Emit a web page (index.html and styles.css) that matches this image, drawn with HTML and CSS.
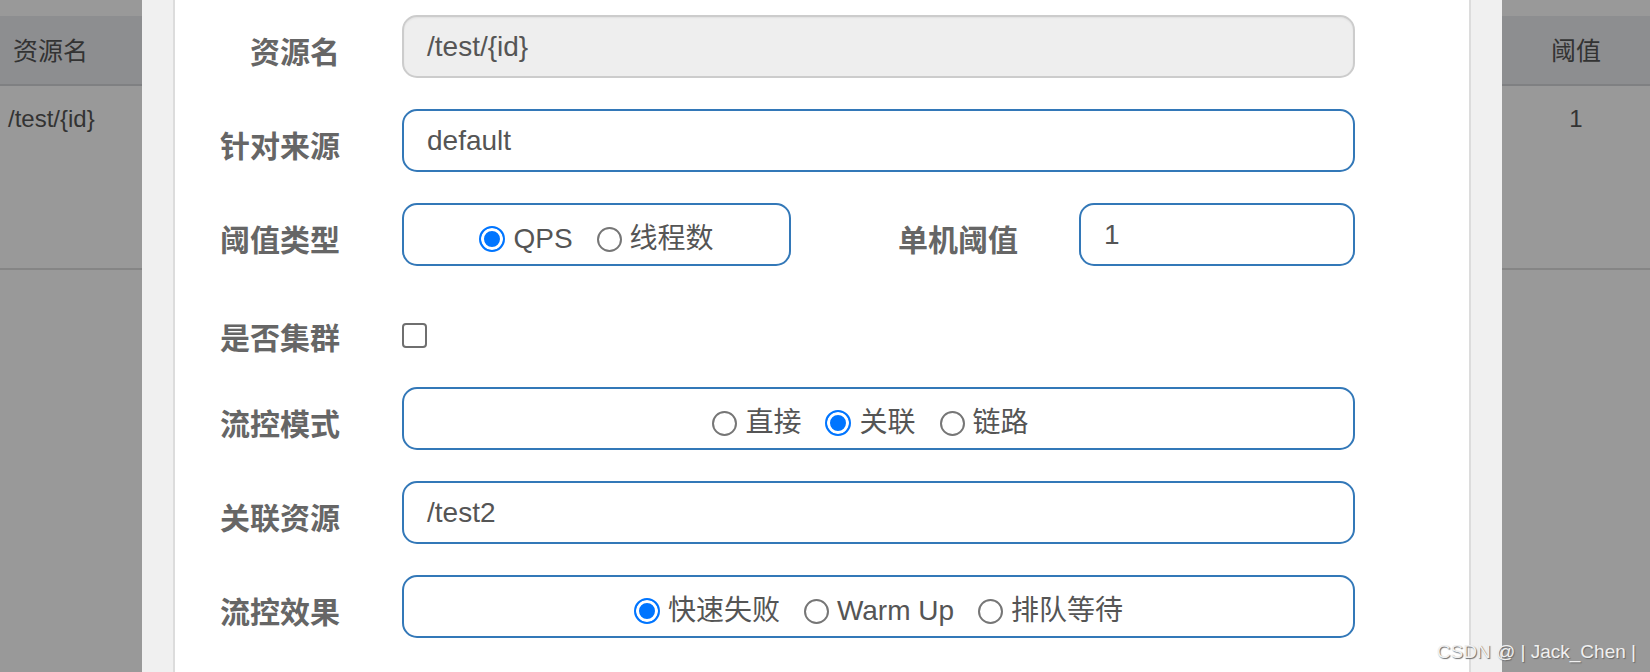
FILE: index.html
```html
<!DOCTYPE html>
<html lang="zh">
<head>
<meta charset="utf-8">
<title>流控规则</title>
<link rel="stylesheet" href="styles.css">
</head>
<body>
<div class="page">
  <div class="bg-table">
    <div class="th th-name">资源名</div>
    <div class="th th-val">阈值</div>
    <div class="td td-name">/test/{id}</div>
    <div class="td td-val">1</div>
  </div>

  <div class="modal">
    <div class="modal-content">
      <div class="form">
        <div class="row">
          <div class="label">资源名</div>
          <div class="control"><div class="input disabled">/test/{id}</div></div>
        </div>
        <div class="row">
          <div class="label">针对来源</div>
          <div class="control"><div class="input">default</div></div>
        </div>
        <div class="row">
          <div class="label">阈值类型</div>
          <div class="control split">
            <div class="box radios box-type">
              <span class="opt"><span class="rad on"></span>QPS</span>
              <span class="opt"><span class="rad"></span>线程数</span>
            </div>
            <div class="label label-inner">单机阈值</div>
            <div class="input input-small">1</div>
          </div>
        </div>
        <div class="row row-check">
          <div class="label">是否集群</div>
          <div class="control"><span class="checkbox"></span></div>
        </div>
        <div class="row">
          <div class="label">流控模式</div>
          <div class="control"><div class="box radios pad-mode">
            <span class="opt"><span class="rad"></span>直接</span>
            <span class="opt"><span class="rad on"></span>关联</span>
            <span class="opt"><span class="rad"></span>链路</span>
          </div></div>
        </div>
        <div class="row">
          <div class="label">关联资源</div>
          <div class="control"><div class="input">/test2</div></div>
        </div>
        <div class="row">
          <div class="label">流控效果</div>
          <div class="control"><div class="box radios pad-effect">
            <span class="opt"><span class="rad on"></span>快速失败</span>
            <span class="opt"><span class="rad"></span>Warm Up</span>
            <span class="opt"><span class="rad"></span>排队等待</span>
          </div></div>
        </div>
      </div>
    </div>
  </div>

  <div class="watermark">CSDN @ | Jack_Chen |</div>
</div>
</body>
</html>
```

FILE: styles.css
```css
html, body {
  margin: 0;
  padding: 0;
}
body {
  width: 1650px;
  height: 672px;
  overflow: hidden;
  background: #999999;
  font-family: "Liberation Sans", "Noto Sans CJK SC", sans-serif;
}
.page {
  position: relative;
  width: 1650px;
  height: 672px;
  overflow: hidden;
}

/* background table (under the overlay) */
.bg-table {
  padding-top: 16px;
  display: grid;
  grid-template-columns: 1fr 148px;
  color: #333333;
}
.th {
  background: #8d8e90;
  height: 70px;
  line-height: 70px;
  font-size: 25px;
  border-bottom: 2px solid #7f8082;
  box-sizing: border-box;
}
.th-name { padding-left: 13px; }
.th-val { text-align: center; }
.td {
  height: 184px;
  border-bottom: 2px solid #858585;
  box-sizing: border-box;
  font-size: 24px;
  padding-top: 19px;
  line-height: 28px;
}
.td-name { padding-left: 8px; }
.td-val { text-align: center; }

/* modal */
.modal {
  position: absolute;
  left: 142px;
  top: 0;
  width: 1360px;
  height: 672px;
  background: #f0f0f0;
  padding: 0 31px;
  box-sizing: border-box;
}
.modal-content {
  height: 100%;
  background: #ffffff;
  border-left: 2px solid #dcdcdc;
  border-right: 2px solid #dcdcdc;
}
.form {
  padding-top: 15px;
}
.row {
  display: flex;
  align-items: center;
  height: 63px;
  margin-bottom: 31px;
}
.row-check {
  padding-top: 4px;
  margin-bottom: 23px;
}
.label {
  width: 165px;
  flex: none;
  text-align: right;
  font-family: "Noto Sans CJK SC", sans-serif;
  font-weight: bold;
  font-size: 30px;
  color: #666666;
  padding-top: 6px;
  margin-right: 62px;
  line-height: 40px;
}
.control {
  width: 953px;
  height: 63px;
  display: flex;
  align-items: center;
}
.input {
  box-sizing: border-box;
  width: 100%;
  height: 63px;
  border: 2px solid #3378b8;
  border-radius: 15px;
  padding-left: 23px;
  display: flex;
  align-items: center;
  font-size: 28px;
  color: #555555;
}
.input.disabled {
  background: #eeeeee;
  border-color: #cccccc;
  box-shadow: inset 0 1px 2px rgba(0,0,0,0.06);
}
.split {
  justify-content: flex-start;
}
.box {
  box-sizing: border-box;
  height: 63px;
  border: 2px solid #3378b8;
  border-radius: 15px;
  width: 100%;
}
.box-type {
  width: 389px;
  flex: none;
}
.label-inner {
  width: 227px;
  margin-right: 61px;
}
.input-small {
  width: 276px;
  flex: none;
}
.radios {
  display: flex;
  justify-content: center;
  align-items: center;
  padding-top: 9px;
  font-size: 28px;
  color: #555555;
}
.pad-mode { padding-right: 16px; }
.pad-effect { padding-right: 0; }
.opt {
  display: inline-flex;
  align-items: center;
  margin-right: 24px;
  line-height: 34px;
}
.opt:last-child { margin-right: 0; }
.rad {
  box-sizing: border-box;
  width: 25px;
  height: 25px;
  border: 2px solid #767676;
  border-radius: 50%;
  margin-right: 8px;
  background: #ffffff;
  flex: none;
}
.rad.on {
  width: 26px;
  height: 26px;
  border: 2px solid #0075ff;
  background: #0075ff;
  box-shadow: inset 0 0 0 3px #ffffff;
}
.checkbox {
  display: block;
  box-sizing: border-box;
  width: 25px;
  height: 25px;
  border: 2px solid #6f6f6f;
  border-radius: 4px;
  background: #ffffff;
  margin-top: 6px;
}

/* watermark overlay */
.watermark {
  position: absolute;
  right: 14px;
  top: 640px;
  font-size: 19px;
  line-height: 24px;
  color: #f0f0f0;
  text-shadow: 1px 1px 1px #6a6a6a;
  font-family: "Liberation Sans", "Noto Sans CJK SC", sans-serif;
}
```
